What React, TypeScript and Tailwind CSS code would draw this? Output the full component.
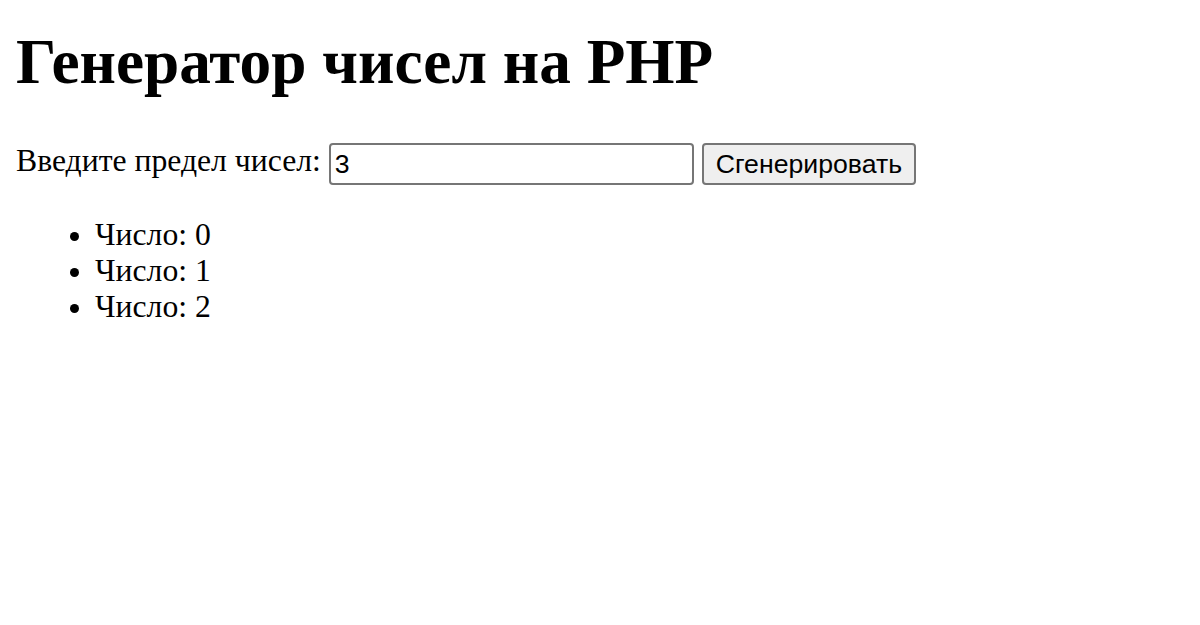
export default function App() {
  const limit = 3;
  const numbers = Array.from({ length: limit }, (_, i) => i);

  return (
    <div className="min-h-screen bg-white px-4 text-black font-['Liberation_Serif','Times_New_Roman',serif]">
      <h1 className="mt-[26px] mb-[43px] text-[63.3px] font-bold leading-[73.6px]">
        Генератор чисел на PHP
      </h1>

      {/* form row */}
      <form className="text-[31.7px] leading-[36.8px]" onSubmit={(e) => e.preventDefault()}>
        Введите предел чисел:{" "}
        <input
          type="number"
          defaultValue={limit}
          className="h-[42px] w-[365px] rounded-[4px] border-2 border-[#767676] bg-white px-[4px] align-[-2px] text-[26.67px] text-black font-['Liberation_Sans',Arial,sans-serif] [appearance:textfield] [&::-webkit-inner-spin-button]:appearance-none"
        />{" "}
        <button
          type="submit"
          className="h-[42px] rounded-[4px] border-2 border-[#767676] bg-[#efefef] px-[12px] align-[-2px] text-[26.67px] text-black font-['Liberation_Sans',Arial,sans-serif]"
        >
          Сгенерировать
        </button>
      </form>

      <ul className="mt-[32px] list-disc pl-[79px] text-[31.7px] leading-[36px]">
        {numbers.map((n) => (
          <li key={n}>Число: {n}</li>
        ))}
      </ul>
    </div>
  );
}
